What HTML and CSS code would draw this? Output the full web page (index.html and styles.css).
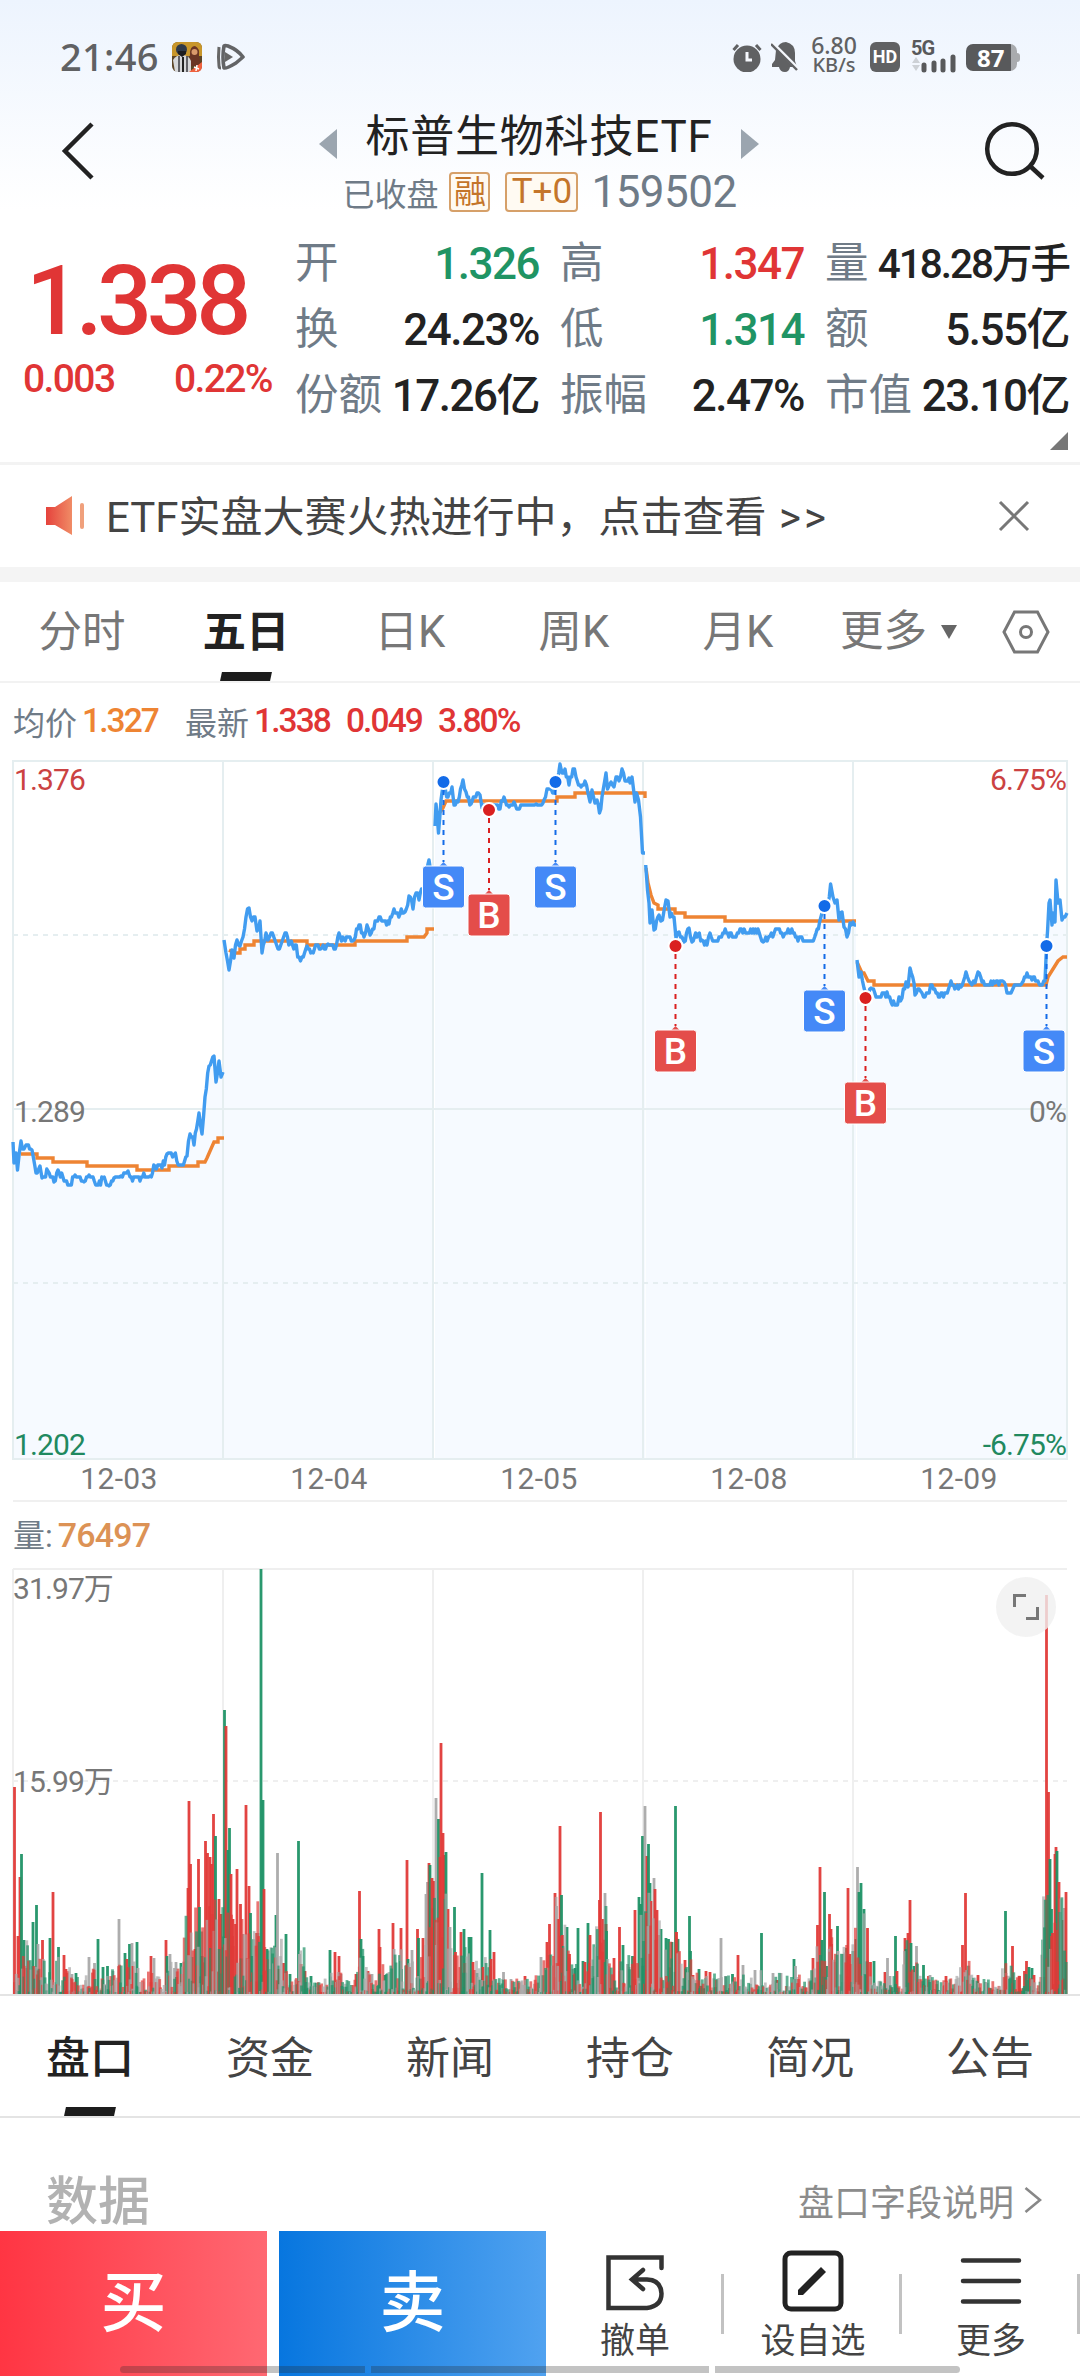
FILE: index.html
```html
<!DOCTYPE html>
<html lang="zh-CN">
<head>
<meta charset="UTF-8">
<meta name="viewport" content="width=device-width, initial-scale=1.0">
<title>标普生物科技ETF 159502</title>
<link rel="stylesheet" href="styles.css">
</head>
<body>
<div class="top">
  <div class="status">
    <div class="status-left">
      <span class="clock">21:46</span>
      <svg class="game-icon" width="30" height="30" viewBox="0 0 30 30">
        <rect width="30" height="30" rx="6" fill="#5c4526"/>
        <path d="M0 6Q0 0 6 0H24Q30 0 30 6V14H0Z" fill="#c8962b"/>
        <path d="M18 12Q18 4 23 4Q28 6 27 14L29 24H17Z" fill="#6b3524"/>
        <circle cx="22.500" cy="10" r="3" fill="#d99a6c"/>
        <path d="M1 18Q4 13 10 13Q17 13 19 19V30H3Z" fill="#d5d6d8"/>
        <path d="M7 14V30M15 14V30" stroke="#3b3b40" stroke-width="1.500"/>
        <path d="M11 15V30" stroke="#222" stroke-width="2"/>
        <circle cx="9.500" cy="7.500" r="5.500" fill="#2f3a4a"/>
        <path d="M6 9H14V12L10 15L6 12Z" fill="#1c1d20"/>
        <path d="M30 20V24Q30 30 24 30H17Z" fill="#f0623f"/>
        <path d="M22 25L27 27M25 23L24 29" stroke="#fff" stroke-width="1.500"/>
      </svg>
      <svg width="30" height="28" viewBox="0 0 30 28">
        <path d="M3 4Q2 14 3 23Q3 25 5 25" fill="none" stroke="#666" stroke-width="3"/>
        <path d="M8 3Q6 14 8 25Q10 26 20 20L27 14Q22 7 12 3Q9 2 8 3Z" fill="none" stroke="#636466" stroke-width="3.600" stroke-linejoin="round"/>
        <path d="M9 9L17 14L9 19Z" fill="#666"/>
      </svg>
    </div>
    <div class="status-right">
      <svg width="30" height="30" viewBox="0 0 30 30">
        <circle cx="15" cy="17" r="13.500" fill="#606163"/>
        <path d="M1.500 8L6 3M28.500 8L24 3" stroke="#606163" stroke-width="3"/>
        <path d="M15 10V18H20" fill="none" stroke="#f5f8fd" stroke-width="3"/>
      </svg>
      <svg class="mute" width="28" height="30" viewBox="0 0 28 30">
        <path d="M5 8Q8 0 15 0Q24 2 24 11V19L26 25H1V22L4 18Z" fill="#606163"/>
        <path d="M8 25Q9 30 14 30Q18 30 19 25Z" fill="#606163"/>
        <path d="M-1 -1L28 28" stroke="#f5f8fd" stroke-width="4"/>
        <path d="M0 2L26 28" stroke="#606163" stroke-width="2.400"/>
      </svg>
      <div class="speed"><span>6.80</span><span>KB/s</span></div>
      <span class="hd">HD</span>
      <svg class="signal" width="46" height="34" viewBox="0 0 46 34">
        <text x="0" y="16" class="net">5G</text>
        <path d="M1 24L5 18L9 24ZM1 26L5 32L9 26Z" fill="#cdd1d6"/>
        <path d="M13 26V31M23 24V31M32 22V31M42 18V31" stroke="#58595b" stroke-width="5" stroke-linecap="round"/>
      </svg>
      <div class="battery"><span>87</span></div>
    </div>
  </div>
  <div class="nav">
    <svg width="34" height="60" viewBox="0 0 34 60"><path d="M31 3L4 30L31 57" fill="none" stroke="#222" stroke-width="4.500"/></svg>
    <div class="nav-title">
      <div class="fund">
        <svg width="18" height="30" viewBox="0 0 18 30"><path d="M18 0V30L0 15Z" fill="#9ba5af"/></svg>
        <h1>标普生物科技ETF</h1>
        <svg width="18" height="30" viewBox="0 0 18 30"><path d="M0 0V30L18 15Z" fill="#9ba5af"/></svg>
      </div>
      <div class="fund-sub">
        <span>已收盘</span><span class="badge">融</span><span class="badge badge-t">T+0</span><span class="code">159502</span>
      </div>
    </div>
    <svg width="62" height="60" viewBox="0 0 62 60"><circle cx="28" cy="28" r="24.800" fill="none" stroke="#222" stroke-width="4.500"/><path d="M46 45L59 57" stroke="#222" stroke-width="4.500"/></svg>
  </div>
</div>

<div class="quote">
  <div class="price red">
    <div class="price-now">1.338</div>
    <div class="price-change"><span>0.003</span><span>0.22%</span></div>
  </div>
  <div class="quote-grid">
    <div><label>开</label><b class="green">1.326</b></div>
    <div><label>高</label><b class="red">1.347</b></div>
    <div><label>量</label><b class="small">418.28万手</b></div>
    <div><label>换</label><b>24.23%</b></div>
    <div><label>低</label><b class="green">1.314</b></div>
    <div><label>额</label><b>5.55亿</b></div>
    <div><label>份额</label><b>17.26亿</b></div>
    <div><label>振幅</label><b>2.47%</b></div>
    <div><label>市值</label><b>23.10亿</b></div>
  </div>
  <div class="expand"></div>
</div>

<div class="notice">
  <svg width="40" height="40" viewBox="0 0 40 40">
    <defs><linearGradient id="horn"><stop offset="0" stop-color="#e5423c"/><stop offset="1" stop-color="#f08c66"/></linearGradient></defs>
    <path d="M0 11H9L26 0V39L9 29H0Z" fill="url(#horn)"/>
    <path d="M36 9V31" stroke="#f0a07c" stroke-width="4" stroke-linecap="round"/>
  </svg>
  <span>ETF实盘大赛火热进行中，点击查看 <em>&gt;&gt;</em></span>
  <svg width="32" height="32" viewBox="0 0 32 32"><path d="M2 2L30 30M30 2L2 30" stroke="#777" stroke-width="3"/></svg>
</div>

<div class="period">
  <div>分时</div>
  <div class="active">五日</div>
  <div>日K</div>
  <div>周K</div>
  <div>月K</div>
  <div class="more">更多<svg width="16" height="14" viewBox="0 0 16 14"><path d="M0 0H16L8 14Z" fill="#666"/></svg></div>
  <svg width="48" height="44" viewBox="0 0 48 44"><path d="M12.500 2H35.500L46 22L35.500 42H12.500L2 22Z" fill="none" stroke="#777" stroke-width="3"/><circle cx="24" cy="22" r="5.500" fill="none" stroke="#777" stroke-width="3"/></svg>
</div>

<div class="legend">
  <span>均价</span><b class="orange">1.327</b>
  <span class="latest">最新</span><b class="red">1.338</b><b class="red">0.049</b><b class="red">3.80%</b>
</div>

<svg class="chart" width="1080" height="750" viewBox="0 750 1080 750">
  <g id="area"></g>
  <g class="grid">
    <path d="M13 761H1067V1459H13ZM223 761V1459M433 761V1459M643 761V1459M853 761V1459M13 1109H1067"/>
    <path d="M13 935H1067M13 1283H1067" stroke-dasharray="5 5"/>
  </g>
  <g class="avg">
    <path d="M21 1154H37V1158H53V1162H87V1166H137V1170H169V1166H198V1162H205L207 1158L214 1142H218V1138H224"/>
    <path d="M229 950L234 953H240V949H245V945H254V941H307V945H355V941H407V937H424L427 933V929H434"/>
    <path d="M436 818L443 808L446 801H557V797H575V793H645V798"/>
    <path d="M646 868L648 883L651 895L654 903L658 905V909H675V913H685V917H725V921H856"/>
    <path d="M857 962L862 973H864L868 981H874V985H1046L1048 977L1053 969L1058 961L1063 957H1067"/>
  </g>
  <g id="price"></g>
  <g class="axis">
    <text x="14" y="790" class="up">1.376</text>
    <text x="1066" y="790" class="up end">6.75%</text>
    <text x="14" y="1122">1.289</text>
    <text x="1066" y="1122" class="end">0%</text>
    <text x="14" y="1455" class="down">1.202</text>
    <text x="1066" y="1455" class="down end">-6.75%</text>
    <text x="119" y="1489" class="date">12-03</text>
    <text x="329" y="1489" class="date">12-04</text>
    <text x="539" y="1489" class="date">12-05</text>
    <text x="749" y="1489" class="date">12-08</text>
    <text x="959" y="1489" class="date">12-09</text>
  </g>
  <g id="trades"></g>
</svg>

<div class="vol-title"><span>量:</span><b>76497</b></div>

<div class="vol">
  <svg class="chart" width="1080" height="430" viewBox="0 1567 1080 430">
    <path class="vol-grid" d="M13 1569H1067M13 1569V1994M223 1569V1994M433 1569V1994M643 1569V1994M853 1569V1994"/>
    <path class="vol-grid" d="M13 1781H1067" stroke-dasharray="5 5"/>
    <g id="bars"></g>
    <path d="M0 1995H1080" stroke="#e4e4e4" stroke-width="2"/>
    <g class="axis">
      <text x="13" y="1599">31.97万</text>
      <text x="13" y="1792">15.99万</text>
    </g>
  </svg>
  <div class="fullscreen">
    <svg width="28" height="28" viewBox="0 0 28 28"><path d="M2.500 14V2.500H14M25.500 14V25.500H14" fill="none" stroke="#777" stroke-width="3"/></svg>
  </div>
</div>

<div class="info-tabs">
  <div class="active">盘口</div>
  <div>资金</div>
  <div>新闻</div>
  <div>持仓</div>
  <div>简况</div>
  <div>公告</div>
</div>

<div class="data-head">
  <h2>数据</h2>
  <span>盘口字段说明<svg width="18" height="28" viewBox="0 0 18 28"><path d="M1.500 2L16 14L1.500 26" fill="none" stroke="#888" stroke-width="2.600"/></svg></span>
</div>

<div class="bottom">
  <div class="buy">买</div>
  <div class="sell">卖</div>
  <div class="tool">
    <svg width="62" height="62" viewBox="0 0 62 62"><path d="M57.500 18V7.500H4.500V58H43Q57.500 56 57.500 43.500Q57 30 43 29.500H29M39 20L28 29.500L39 39" fill="none" stroke="#333" stroke-width="4.500" stroke-linecap="round"/></svg>
    <span>撤单</span>
  </div>
  <div class="tool">
    <svg width="62" height="62" viewBox="0 0 62 62"><rect x="3" y="3" width="56" height="56" rx="6" fill="none" stroke="#222" stroke-width="5"/><path d="M16 45V40L39 17L44 22L21 45Z" fill="#222"/></svg>
    <span>设自选</span>
  </div>
  <div class="tool">
    <svg width="62" height="62" viewBox="0 0 62 62"><path d="M3 10.500H59M3 31H59M3 51.500H59" stroke="#333" stroke-width="4.500" stroke-linecap="round"/></svg>
    <span>更多</span>
  </div>
  <div class="home-bar"><i></i><i></i><i></i></div>
</div>
<script src="chart.js"></script>
</body>
</html>
```

FILE: styles.css
```css
body {
  margin: 0;
  width: 1080px;
  height: 2376px;
  overflow: hidden;
  background: #fff;
  color: #222;
  font-family: Roboto, "Noto Sans CJK SC", sans-serif;
}
svg {
  display: block;
  flex: none;
}
.red { color: #e03535; }
.green { color: #1f9464; }
.orange { color: #ee8433; }

/* status bar + title */
.top {
  height: 230px;
  background: linear-gradient(#edf4fe, #fff 210px);
}
.status {
  display: flex;
  justify-content: space-between;
  align-items: center;
  box-sizing: border-box;
  height: 97px;
  padding: 17px 63px 0 60px;
  color: #606163;
}
.status-left, .status-right {
  display: flex;
  align-items: center;
}
.clock {
  font: 500 38px "Noto Sans", sans-serif;
  letter-spacing: 0.3px;
  line-height: 40px;
  margin: -2px 0 0;
  width: 112px;
}
.game-icon { margin-right: 14px; }
.mute { margin: 0 11px 0 9px; }
.speed {
  display: flex;
  flex-direction: column;
  align-items: center;
  width: 48px;
  margin: -4px 12px 0 0;
  font: 500 23px/20px "Noto Sans", sans-serif;
}
.speed span + span { font-size: 20px; }
.hd {
  width: 30px;
  height: 30px;
  border-radius: 6px;
  background: #606163;
  color: #fff;
  font: bold 18px/30px Roboto, sans-serif;
  text-align: center;
}
.signal { margin: -3px 9px 0 11px; }
.net {
  font: bold 20px Roboto, sans-serif;
  fill: #58595b;
  letter-spacing: -1px;
}
.battery {
  position: relative;
  box-sizing: border-box;
  width: 51px;
  height: 27px;
  border-radius: 7px;
  background: linear-gradient(90deg, #58595b 45px, #a9abae 45px);
  color: #fff;
  font: bold 24px/27px "Noto Sans", sans-serif;
  padding-left: 11px;
}
.battery::after {
  content: "";
  position: absolute;
  left: 51px;
  top: 9px;
  width: 3px;
  height: 9px;
  border-radius: 0 3px 3px 0;
  background: #a9abae;
}
.nav {
  display: flex;
  justify-content: space-between;
  padding: 0 34px 0 61px;
}
.nav > svg { margin-top: 24px; }
.nav-title {
  padding-top: 3px;
  padding-right: 1px;
}
.fund {
  display: flex;
  align-items: center;
  justify-content: center;
  gap: 28px;
}
.fund svg { margin-top: 14px; }
.fund h1 {
  margin: 0;
  font-size: 44px;
  font-weight: 400;
  line-height: 74px;
  letter-spacing: 0.8px;
}
.fund-sub {
  display: flex;
  align-items: center;
  height: 36px;
  padding-left: 23px;
  font-size: 32px;
  color: #6f7b87;
}
.badge {
  box-sizing: border-box;
  width: 41px;
  height: 40px;
  margin-left: 11px;
  border: 2px solid #d6a069;
  border-radius: 4px;
  background: #fffaf2;
  color: #c4752a;
  line-height: 36px;
  text-align: center;
}
.badge-t {
  width: 73px;
  margin-left: 15px;
  font-size: 35px;
}
.code {
  margin-left: 13px;
  font-size: 44px;
  letter-spacing: -0.5px;
}

/* quote panel */
.quote {
  position: relative;
  display: flex;
  height: 232px;
  border-bottom: 3px solid #f3f3f3;
}
.price {
  width: 295px;
  box-sizing: border-box;
  padding: 14px 23px 0;
}
.price-now {
  font-size: 97px;
  font-weight: 500;
  line-height: 114px;
  letter-spacing: -5.500px;
  padding-left: 3px;
}
.price-change {
  display: flex;
  justify-content: space-between;
  font-size: 39px;
  font-weight: 500;
  line-height: 42px;
  letter-spacing: -1.600px;
}
.quote-grid {
  display: grid;
  grid-template-columns: repeat(3, 244px);
  grid-auto-rows: 66px;
  column-gap: 21px;
  padding-top: 1px;
}
.quote-grid div {
  display: flex;
  justify-content: space-between;
  line-height: 66px;
  white-space: nowrap;
}
.quote-grid label {
  font-size: 43.500px;
  color: #6f7b87;
}
.quote-grid b {
  font-size: 44px;
  font-weight: 500;
  letter-spacing: -1.500px;
}
.quote-grid .small {
  font-size: 40.500px;
  letter-spacing: -2px;
}
.expand {
  position: absolute;
  right: 12px;
  bottom: 12px;
  border-left: 18px solid transparent;
  border-bottom: 18px solid #777;
}

.notice {
  display: flex;
  align-items: center;
  height: 102px;
  padding: 0 50px 0 46px;
  border-bottom: 15px solid #f4f4f4;
  color: #444;
  font-size: 42px;
}
.notice span {
  flex: 1;
  padding: 0 0 6px 20px;
}
.notice em {
  font-style: normal;
  letter-spacing: 3px;
  margin-left: 2px;
}

/* period tabs */
.period {
  display: flex;
  align-items: center;
  height: 99px;
  border-bottom: 2px solid #f2f2f2;
  font-size: 43.500px;
  color: #777;
}
.period > div {
  width: 164px;
  height: 99px;
  line-height: 101px;
  text-align: center;
}
.period .more {
  display: flex;
  align-items: center;
  width: 162px;
  margin-left: 20px;
  gap: 14px;
}
.active {
  position: relative;
  color: #222;
  font-weight: 500;
}
.period .active { font-weight: 700; }
.active::after {
  content: "";
  position: absolute;
  left: 50%;
  bottom: 0;
  width: 50px;
  height: 9px;
  margin-left: -25px;
  background: #1c1c1c;
  transform: skewX(-12deg);
}

.legend {
  display: flex;
  align-items: center;
  height: 67px;
  padding: 8px 0 0 13px;
  box-sizing: border-box;
  font-size: 32px;
  color: #6f7b87;
}
.legend b {
  font-size: 33.500px;
  font-weight: 500;
  letter-spacing: -1.900px;
  margin: 0 13px 0 5px;
}
.legend b + b { margin-left: 3px; }
.legend .latest { margin-left: 14px; }

/* charts */
.grid path {
  fill: none;
  stroke: #e5eef0;
  stroke-width: 2;
}
.vol-grid {
  fill: none;
  stroke: #efefef;
  stroke-width: 2;
}
.avg path {
  fill: none;
  stroke: #ee8433;
  stroke-width: 3.400;
}
.line {
  fill: none;
  stroke: #419cf0;
  stroke-width: 3.400;
  stroke-linejoin: round;
}
.area { fill: #f6faff; }
.axis text {
  font-size: 30px;
  fill: #777;
  letter-spacing: -0.900px;
}
.axis .up { fill: #cb4242; }
.axis .down { fill: #21895f; }
.axis .end { text-anchor: end; }
.axis .date {
  text-anchor: middle;
  letter-spacing: 0.400px;
}
.tag {
  font: 500 37px Roboto, sans-serif;
  fill: #fff;
  text-anchor: middle;
}
.vol-title {
  display: flex;
  align-items: center;
  height: 65px;
  margin: 0 13px;
  border-top: 2px solid #f0f0f0;
  font-size: 32px;
  color: #6f7b87;
}
.vol-title span { margin-top: -3px; }
.vol-title b {
  font-size: 34px;
  font-weight: 500;
  letter-spacing: -0.800px;
  margin-left: 5px;
  color: #dc9255;
}
.vol { position: relative; }
.fullscreen {
  position: absolute;
  left: 996px;
  top: 10px;
  width: 60px;
  height: 60px;
  border-radius: 50%;
  background: rgba(240, 240, 240, 0.8);
  display: flex;
  align-items: center;
  justify-content: center;
}

.info-tabs {
  display: flex;
  height: 119px;
  border-bottom: 2px solid #e4e4e4;
  font-size: 44px;
  color: #444;
}
.info-tabs div {
  width: 180px;
  line-height: 124px;
  text-align: center;
}
.info-tabs .active { color: #222; }
.data-head {
  display: flex;
  justify-content: space-between;
  align-items: center;
  height: 113px;
  padding: 0 38px 0 46px;
  box-sizing: border-box;
}
.data-head h2 {
  margin: 56px 0 0;
  font-size: 52px;
  font-weight: 500;
  line-height: 60px;
  color: #b2b2b2;
}
.data-head span {
  display: flex;
  align-items: center;
  gap: 10px;
  margin-top: 51px;
  font-size: 36px;
  color: #8c8c8c;
}

/* trade bar */
.bottom {
  position: relative;
  display: flex;
  height: 145px;
  background: #fff;
}
.buy, .sell {
  width: 267px;
  line-height: 145px;
  text-align: center;
  color: #fff;
  font-size: 66px;
  font-weight: 500;
}
.buy {
  margin-right: 12px;
  background: linear-gradient(90deg, #ff3543, #ff6872);
}
.sell { background: linear-gradient(90deg, #0776df, #50a2f0); }
.tool {
  position: relative;
  display: flex;
  flex-direction: column;
  align-items: center;
  width: 178px;
  padding-top: 19px;
  font-size: 35px;
  line-height: 52px;
  color: #444;
}
.tool span { margin-top: 4px; }
.tool::after {
  content: "";
  position: absolute;
  right: 0;
  top: 43px;
  width: 3px;
  height: 60px;
  background: #c2c2c2;
}
.home-bar {
  position: absolute;
  left: 120px;
  bottom: 3px;
  display: flex;
  gap: 6px;
}
.home-bar i {
  width: 245px;
  height: 7px;
  background: rgba(40, 40, 40, 0.28);
}
.home-bar i:nth-child(2) { width: 338px; }
.home-bar i:first-child { border-radius: 4px 0 0 4px; }
.home-bar i:last-child { border-radius: 0 4px 4px 0; }
```

FILE: chart.js
```js
// price turning points for each of the five days, "x,y" on the chart canvas
const days = [
  '13,1142 14,1163 16,1153 17.5,1170 21,1141 24,1149 26,1145 32,1150 36,1173 40,1166 42,1178 48,1171 54,1182 58,1170 69,1185 75,1175 84,1182 89,1175 97,1185 103,1178 109,1186 114,1178 121,1176 128,1171 130,1177 150,1176 155,1166 162,1168 167,1154 174,1155 181,1165 187,1156 190,1134 194,1145 199,1113 202,1134 205,1097 209,1066 214,1056 216,1082 219,1061 221,1077 223,1072',
  '224,940 226,953 229,970 232,950 234,958 237,940 240,946 243,937 246,917 249,908 252,921 255,917 257,931 260,921 262,953 266,933 268,940 271,933 278,949 285,933 290,944 295,945 299,957 302,957 307,946 312,952 318,945 322,948 328,944 334,949 339,933 344,940 350,937 354,940 359,925 364,937 367,925 370,935 379,917 383,921 389,924 394,909 400,914 405,912 409,896 413,909 416,893 419,900 424,887 429,860 431,873 433,867',
  '435,826 436,804 438.5,833 441,800 444,783 448,797 452,787 454,805 458,802 463,780 466,792 471,804 477,793 480,795 482,808 489,805 500,809 504,797 509,807 514,802 518,809 525,805 536,804 543,803 544,800 547,789 554,793 556,785 560,764 562,773 565,769 569,785 573,769 576,777 581,787 585,781 588,793 590,802 592,790 595,803 597,800 599.5,813 602,797 606,773 607.5,789 611,782 614,787 616,777 619,781 622,769 625,781 629,778 630,783 632,777 635,802 636.5,793 638.5,800 640.5,817 642.5,853 645,853',
  '645.7,865 647.5,890 649,903 650,923 652,910 654,930 659,915 662.5,920 666,900 668,901 670,917 674,917 676,938 679,932 682,937 684,942 689,928 692,942 698,934 702,940 707,945 710,933 714,941 724,933 736,937 740,929 747,933 758,929 763,942 770,936 775.5,929 784.5,934 793,933 798,941 812,941 816,933 819.6,922 822,913 824,907 828,903 830.6,884 833,897 835,903 837,900 839,920 842,912 844,927 847,937 850,923 853,922 856,925',
  '857,960 859,977 861,972 864,988 867,1001 871,988 876,997 881,997 887,992 891,1002 896,1005 899,997 902,998 906,982 908,987 910,968 914,983 915,995 920.5,991 925,997 932,985 936,993 946,993 951,981 956,988 961,987 966,972 970.5,983 975,983 978,972 982,982 995,983 1004,982 1007,993 1011,993 1014.5,985 1022,983 1027,973 1032,980 1038,981 1041,985 1045,981 1046.5,947 1047.6,930 1049,903 1050,900 1052,925 1053,913 1055,922 1056,880 1058,903 1060,900 1062,920 1065,917 1067,913'
];

// marked volume bars: colour (r up, g down, a flat), x, height
const volumes = 'r14.5,207 r18,58 r20,117 g21.5,140 g24,54 r26,26 g33,72 g36.5,89 a38,50 r42.5,54 g50,56 r53,102 g58.5,47 r64,39 r66,25 a72,20 g76,21 a89,37 a94.5,31 g98,55 g103,27 g107.5,28 a113,23 a119,75 g125,41 r127,35 g129.5,50 a132,51 r133,28 g137,52 a138,26 r151,38 a154,36 r166,54 g167,38 a170,40 a174.5,26 a176,32 g181,31 r182,20 r188,106 r189,193 r190.5,130 g192,37 r195,45 r198.5,135 g199.5,87 g202,38 r205.5,153 r207.5,141 r210,137 r211.5,130 r213.5,180 g215.5,158 r219,95 r221,80 g224.5,284 r226,268 g228,144 g229.5,166 r231,120 r233,75 r235.5,70 r237,125 r240.5,90 a243,60 r246,189 r249,108 g250.5,81 g252,38 r256.5,61 a258,61 g263,194 g261,425 r264,105 g267,45 a270,25 g276,79 a277.5,141 r279,25 r283.5,31 g286,60 g290,20 g298.5,153 a299.5,40 r301,30 r305,23 g311,18 g330,44 r335,42 r339,38 a341,20 r356,20 r359.5,103 g361,55 g363,38 r368,23 a372,20 r379,65 r380,47 g385,19 r393,71 a394,45 r401,66 g401.5,25 r407,134 g408,35 r409.5,27 a412,44 r417.5,65 g418.5,56 r423,56 a426,100 a427.5,112 r429,131 g430,129 r432,116 r434,113 a436,196 g438.5,175 r440,137 r441,251 r443,161 r444,139 g446,142 r448,85 a450,67 g454.5,87 r455.5,42 r461,62 g464,65 r465,31 g469,57 g471,57 r473,32 g477,21 g482,121 r483,27 g490,64 r491,35 r494,42 g503,15 a503.5,22 a511,15 r525,18 a541,37 ' +
  'r547,52 r549.5,70 r555,101 a556.5,88 r558,75 r560,168 g561.5,99 r562.5,59 g563,48 g567,67 r569.5,40 a573,25 g575,26 g578,66 g583,33 r585,32 g588,71 r590,59 g592,28 g597,38 r599.5,94 r600.5,182 r603,75 a605,101 r606,70 g606.5,63 r614,36 r619.5,67 g623,49 a627.5,30 a629,27 g632.5,38 r635,84 g639,97 g640.5,90 g642.5,158 a645,188 r647,138 g648.5,150 g650,111 r651,93 a654,116 r655,105 r657,84 r659,59 g661,65 g666,56 g668.5,55 g672,52 g675.5,188 r676.5,62 g678,55 a678.5,42 r685,34 g689.5,78 g690.5,43 r693,19 g699,25 r706,23 r710,22 a721,56 a725.5,18 g732.5,20 r738,39 a743,29 a755,24 g761.5,61 a773,21 r777,14 a781,21 g794,35 a795.5,28 r813,36 r817.5,69 r820,127 g822,54 g824.5,102 g827,28 r829.5,80 r831,65 r831.5,50 g837.5,68 a838,43 g843,40 g846.5,46 r848,106 r850,40 g853,43 g856,55 a857.5,127 g859,102 g861,111 g864,85 r867.5,66 r870.5,32 g874,33 r885,22 a887.5,36 a890,18 g895.5,58 r897,23 r905,56 g906,45 r908,61 r910,94 g911,51 g914,28 a916.5,48 g923.5,29 r928.5,18 a930,19 r946,18 r962.5,49 r965.5,101 g972.5,14 r978,19 a985.5,12 g1005.5,83 a1006,21 r1012.5,48 r1019.5,18 r1024.5,23 r1026.5,33 g1029,27 g1032,26 r1034,19 r1044,17 r1046.5,399 r1048.5,202 g1050,135 g1051.5,85 r1052.5,61 r1055,140 r1056,147 g1057,143 r1059,112 g1060,82 r1063,74 a1064.5,86 r1066,102';

// buy / sell points
const trades = [['S', 443.5, 782], ['B', 489, 810], ['S', 555.5, 782], ['B', 675.5, 946], ['S', 824.5, 906], ['B', 865.5, 998], ['S', 1046.5, 946]];

let seed = 7;
function rand() {
  seed = (seed * 16807) % 2147483647;
  return seed / 2147483647;
}

// price lines, one minute is 0.875px and one tick is 4px
let area = '', price = '';
days.forEach(day => {
  const pts = day.split(' ').map(p => p.split(',').map(Number));
  const out = [];
  pts.forEach((p, i) => {
    out.push(p);
    const next = pts[i + 1];
    if (!next) return;
    const n = Math.floor((next[0] - p[0]) / 1.2);
    for (let k = 1; k < n; k++) {
      const x = p[0] + (next[0] - p[0]) * k / n;
      const y = p[1] + (next[1] - p[1]) * k / n + (rand() - 0.5) * 6;
      out.push([x.toFixed(1), 1109 + Math.round((y - 1109) / 4) * 4]);
    }
  });
  const d = 'M' + out.map(p => p.join(' ')).join('L');
  price += `<path class="line" d="${d}"/>`;
  area += `<path class="area" d="${d}V1459H${pts[0][0]}Z"/>`;
});
document.getElementById('area').innerHTML = area;
document.getElementById('price').innerHTML = price;

// volume
const colors = { r: '#e03a38', g: '#1f9266', a: '#a9a9a9' };
const bars = volumes.split(' ').map(v => {
  const [x, h] = v.slice(1).split(',').map(Number);
  return { c: v[0], x: x, h: h };
});
function bar(c, x, h, opacity) {
  return `<rect x="${(x - 1.4).toFixed(1)}" y="${(1994 - h).toFixed(1)}" width="2.800" height="${h.toFixed(1)}" fill="${colors[c]}" opacity="${opacity}"/>`;
}
let html = bars.map(b => bar(b.c, b.x, b.h, 0.95)).join('');
for (let x = 14.5; x < 1067; x += 0.875) {
  let near = 0;
  bars.forEach(b => { if (Math.abs(b.x - x) < 7) near += b.h; });
  const h = 2 + Math.pow(rand(), 2) * (12 + Math.min(near * 0.13, 90));
  html += bar('rgaarg'[Math.floor(rand() * 6)], x, h, 0.7);
}
document.getElementById('bars').innerHTML = html;

document.getElementById('trades').innerHTML = trades.map(([t, x, y]) => {
  const fill = t === 'S' ? '#4489f7' : '#e44d4a';
  const dark = t === 'S' ? '#136be8' : '#da2020';
  const bx = Math.min(x, 1044);
  return `<path d="M${x} ${y + 8}V${y + 80}" stroke="${dark}" stroke-width="2" stroke-dasharray="5 5"/>
    <circle cx="${x}" cy="${y}" r="7" fill="${dark}" stroke="#fff" stroke-width="2"/>
    <path d="M${x - 5} ${y + 85}L${x} ${y + 80}L${x + 5} ${y + 85}Z" fill="${fill}"/>
    <rect x="${bx - 21}" y="${y + 84}" width="42" height="42" rx="3" fill="${fill}" stroke="#fff" stroke-width="1"/>
    <text class="tag" x="${bx}" y="${y + 118}">${t}</text>`;
}).join('');
```
